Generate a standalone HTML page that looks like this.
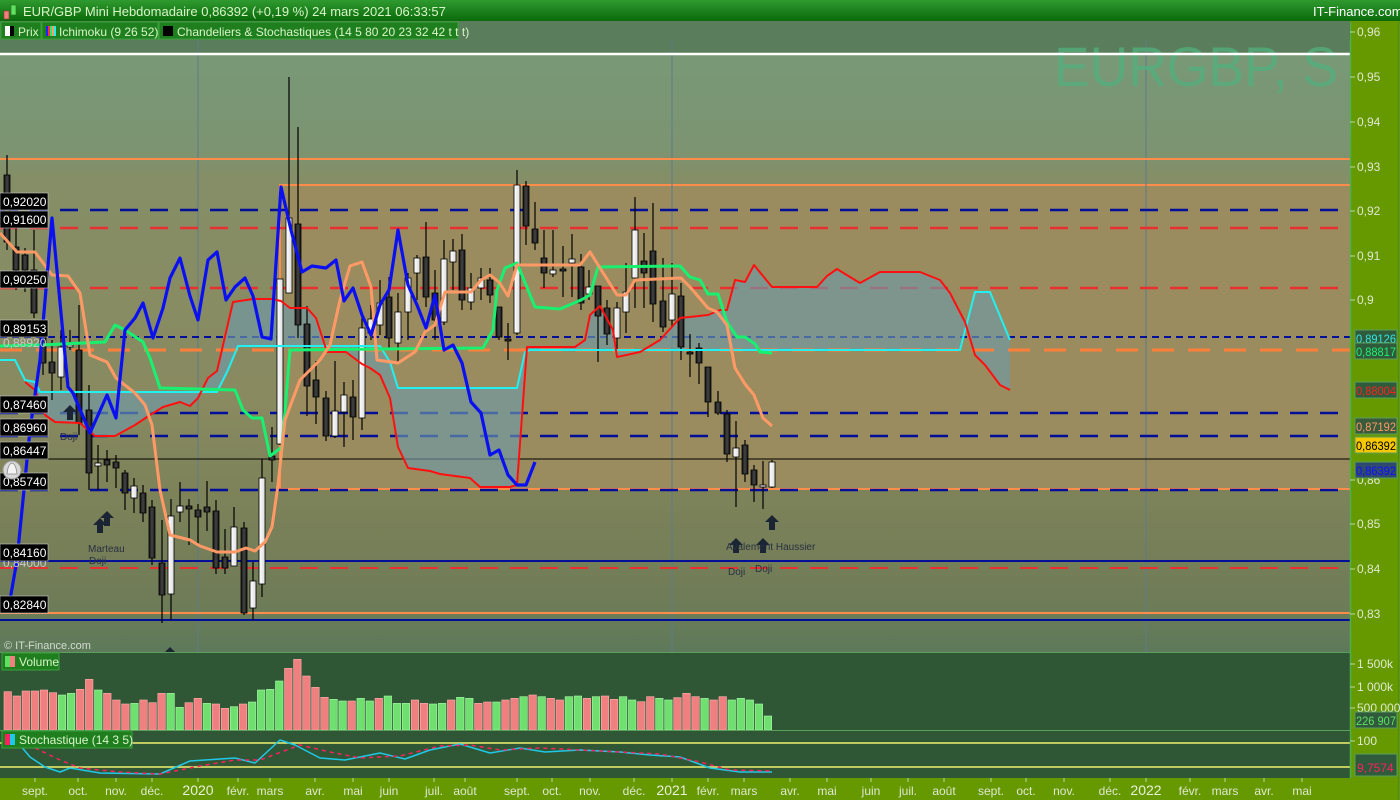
<!DOCTYPE html>
<html><head><meta charset="utf-8">
<style>
html,body{margin:0;padding:0;width:1400px;height:800px;overflow:hidden;background:#669900;font-family:"Liberation Sans",sans-serif;}
#wrap{position:relative;width:1400px;height:800px;}
svg text{font-family:"Liberation Sans",sans-serif;}
</style></head>
<body><div id="wrap">
<svg id="s" width="1400" height="800" xmlns="http://www.w3.org/2000/svg">
<defs>
<linearGradient id="bg" x1="0" y1="0" x2="0" y2="1">
<stop offset="0" stop-color="#779a78"/>
<stop offset="0.2" stop-color="#7c9472"/>
<stop offset="0.25" stop-color="#858e66"/>
<stop offset="0.6" stop-color="#898a60"/>
<stop offset="0.75" stop-color="#7d8259"/>
<stop offset="0.92" stop-color="#6f7c58"/>
<stop offset="1" stop-color="#5d7a5a"/>
</linearGradient>
<linearGradient id="hdr" x1="0" y1="0" x2="0" y2="1">
<stop offset="0" stop-color="#2f9a2f"/><stop offset="1" stop-color="#0b6a0b"/>
</linearGradient>
<linearGradient id="cw" x1="0" y1="0" x2="1" y2="0">
<stop offset="0" stop-color="#fff"/><stop offset="1" stop-color="#ddd"/>
</linearGradient>
<linearGradient id="cb" x1="0" y1="0" x2="1" y2="0">
<stop offset="0" stop-color="#111"/><stop offset="0.5" stop-color="#444"/><stop offset="1" stop-color="#111"/>
</linearGradient>
</defs>
<g id="g"></g>
</svg>
</div>
<script>
var G=document.getElementById("g"),H="";
function r(x,y,w,h,f,extra){H+='<rect x="'+x+'" y="'+y+'" width="'+w+'" height="'+h+'" fill="'+f+'" '+(extra||'')+'/>';}
function l(x1,y1,x2,y2,c,w,d){H+='<line x1="'+x1+'" y1="'+y1+'" x2="'+x2+'" y2="'+y2+'" stroke="'+c+'" stroke-width="'+w+'"'+(d?' stroke-dasharray="'+d+'"':'')+'/>';}
function t(x,y,s,sz,c,extra){H+='<text x="'+x+'" y="'+y+'" font-size="'+sz+'" fill="'+c+'" '+(extra||'')+'>'+s+'</text>';}
function pl(p,c,w,extra){H+='<polyline points="'+p.map(function(a){return a.join(',')}).join(' ')+'" fill="none" stroke="'+c+'" stroke-width="'+w+'" stroke-linejoin="round" '+(extra||'')+'/>';}
r(0,22,1350,630,"url(#bg)");
r(0,22,1350,32,"#5a7e5b");
r(279,184,1071,306,"#9a8c5e");
H+='<rect x="280" y="185" width="1072" height="304" fill="none" stroke="#ff8c4a" stroke-width="2"/>';
[198,672,1146].forEach(function(x){l(x,22,x,778,"#5f7a8a",1);});
t(1054,86,"EURGBP, S",56,"#52b07e",'opacity="0.75" textLength="284" lengthAdjust="spacingAndGlyphs"');
l(0,54,1350,54,"#ffffff",2.5);
l(0,159,1350,159,"#ff8c4a",2);
l(0,210,1350,210,"#000f9a",2.5,"18,12");
l(0,228,1350,228,"#e83030",2.5,"18,12");
l(0,288,1350,288,"#e83030",2.5,"18,12");
l(0,337,1350,337,"#000f9a",2,"7,5");
l(0,413,1350,413,"#000f9a",2.5,"18,12");
l(0,436,1350,436,"#000f9a",2.5,"18,12");
l(0,459,1350,459,"#000",1);
l(0,490,1350,490,"#000f9a",2.5,"18,12");
l(0,561,1350,561,"#000f9a",2);
l(0,568,1350,568,"#e83030",2,"18,12");
l(0,613,1350,613,"#ff8c4a",2);
l(0,620,1350,620,"#000f9a",2);
var red=[[25,382],[35,390],[45,415],[55,422],[80,423],[95,436],[115,436],[135,425],[150,415],[163,407],[180,402],[190,406],[198,398],[208,378],[217,371],[233,302],[253,299],[272,299],[281,301],[290,308],[307,308],[316,318],[327,352],[346,352],[362,364],[370,368],[380,375],[390,398],[398,447],[408,468],[430,471],[440,474],[470,478],[480,487],[510,487],[517,485],[527,347],[575,347],[585,340],[590,315],[600,306],[613,330],[617,357],[640,352],[660,340],[680,318],[708,315],[720,310],[727,310],[735,280],[745,282],[754,265],[772,287],[817,287],[827,276],[837,269],[850,277],[860,283],[880,272],[920,272],[940,280],[950,293],[965,322],[975,355],[985,365],[1000,385],[1010,390]];
var cyan=[[0,360],[15,360],[25,380],[35,382],[40,392],[217,392],[228,370],[238,346],[380,346],[390,362],[398,388],[517,388],[525,352],[530,350],[960,350],[975,292],[990,292],[1010,340]];
var poly=red.concat(cyan.slice(2).reverse());
H+='<polygon points="'+poly.map(function(a){return a.join(',')}).join(' ')+'" fill="#6f9aa8" fill-opacity="0.65"/>';
l(0,350,1350,350,"#ff7f3a",3,"22,14");
var C=[[7,175,242,155,250],[16,247,270,225,290],[25,255,270,248,292],[34,270,313,230,318],[43,327,363,313,375],[52,362,373,340,400],[61,377,347,330,390],[70,346,345,330,350],[79,350,423,305,435],[89,410,473,385,490],[98,466,463,445,490],[107,460,465,450,482],[116,462,468,455,488],[125,473,493,470,510],[134,498,486,478,513],[143,493,513,485,522],[152,507,558,500,565],[162,563,595,520,623],[171,594,516,499,620],[180,512,506,482,522],[189,506,509,499,545],[198,510,517,504,545],[207,507,512,481,531],[216,511,568,500,574],[225,557,568,529,574],[234,566,527,507,566],[244,528,613,522,615],[253,608,581,562,620],[262,584,478,459,597],[272,456,460,427,482],[280,444,279,279,445],[289,293,218,77,293],[298,224,325,127,338],[307,324,386,306,416],[316,380,397,361,424],[326,398,436,391,441],[335,436,411,361,438],[344,412,395,382,447],[353,397,417,380,440],[362,418,328,318,430],[371,333,319,305,340],[380,325,303,280,335],[389,297,338,277,350],[398,343,312,293,362],[408,312,278,273,340],[417,273,258,255,300],[426,257,297,222,307],[435,293,320,270,340],[444,322,259,240,325],[453,262,251,239,290],[462,250,300,234,310],[471,302,288,273,310],[481,288,278,268,300],[490,280,295,268,303],[499,307,337,307,340],[508,339,339,323,360],[517,333,185,170,335],[526,186,226,181,245],[535,229,243,202,250],[544,258,273,230,288],[553,274,270,230,277],[563,269,269,246,297],[572,263,259,234,297],[581,267,303,254,310],[589,294,287,270,300],[598,286,316,287,362],[607,308,334,300,345],[617,338,308,302,350],[626,312,292,263,333],[635,278,230,197,308],[644,261,273,233,308],[653,251,304,203,322],[663,301,327,258,332],[672,320,294,263,327],[681,296,347,283,360],[690,352,352,334,377],[699,348,363,343,384],[708,367,402,367,417],[718,402,413,391,415],[727,414,454,410,462],[736,457,448,421,507],[745,445,474,440,482],[754,470,485,465,502],[763,487,485,461,509],[772,487,462,460,488]];
C.forEach(function(c){var x=c[0],o=c[1],cl=c[2],hi=c[3],lo=c[4];var white=cl<o;
l(x,hi,x,lo,"#000",1.2);var top=Math.min(o,cl),h=Math.max(Math.abs(o-cl),2);
H+='<rect x="'+(x-3)+'" y="'+top+'" width="6" height="'+h+'" fill="'+(white?"url(#cw)":"url(#cb)")+'" stroke="#000" stroke-width="0.8"/>';});
pl(cyan,"#22f0f0",2);
pl(red,"#ff1010",2);
pl([[0,346],[40,345],[105,342],[115,325],[125,330],[143,342],[150,358],[160,388],[235,390],[243,410],[252,418],[262,418],[270,456],[282,447],[290,350],[483,348],[493,330],[497,290],[505,268],[517,263],[535,307],[560,309],[581,300],[590,295],[598,267],[680,266],[690,277],[700,280],[708,294],[718,294],[727,322],[737,337],[745,337],[755,344],[760,352],[772,353]],"#18f070",3);
pl([[0,233],[17,252],[35,252],[52,275],[68,276],[80,293],[90,355],[107,362],[116,378],[135,393],[145,405],[152,425],[160,490],[170,535],[190,540],[200,546],[217,552],[235,552],[246,548],[255,551],[265,542],[272,527],[278,485],[285,420],[300,380],[320,360],[330,345],[340,300],[350,266],[362,262],[371,287],[377,360],[398,363],[415,352],[425,332],[435,325],[445,292],[471,292],[481,280],[490,275],[499,282],[508,296],[517,265],[526,265],[580,265],[590,252],[600,268],[617,295],[626,295],[635,280],[681,278],[690,287],[708,308],[717,312],[727,325],[735,368],[745,384],[754,395],[763,418],[772,426]],"#ff9a66",3);
pl([[3,600],[10,600],[17,560],[30,430],[40,360],[52,218],[68,387],[73,393],[90,433],[107,395],[116,418],[125,330],[135,318],[143,303],[153,338],[163,308],[170,278],[180,258],[190,296],[198,320],[208,260],[217,252],[226,300],[235,287],[245,278],[253,296],[262,337],[271,339],[281,187],[291,230],[302,272],[312,266],[326,268],[336,260],[344,301],[353,288],[362,315],[371,335],[380,305],[389,290],[398,230],[408,285],[417,305],[426,328],[435,295],[444,350],[453,345],[462,363],[471,402],[481,413],[490,455],[499,450],[508,475],[517,485],[526,485],[535,462]],"#0a10f0",3.2);
function arrow(x,y){H+='<path d="M'+(x-7)+' '+(y+7)+' L'+x+' '+y+' L'+(x+7)+' '+(y+7)+' L'+(x+3)+' '+(y+7)+' L'+(x+3)+' '+(y+15)+' L'+(x-3)+' '+(y+15)+' L'+(x-3)+' '+(y+7)+'Z" fill="#1a2433"/>';}
arrow(70,405);arrow(100,518);arrow(107,511);arrow(736,538);arrow(763,538);arrow(772,515);
t(60,440,"Doji",10,"#2a3040");t(88,552,"Marteau",10,"#2a3040");t(89,564,"Doji",10,"#2a3040");
t(726,550,"Avalement Haussier",10,"#2a3040");t(728,575,"Doji",10,"#2a3040");t(755,572,"Doji",10,"#2a3040");
H+='<path d="M165 652 L170 647 L175 652Z" fill="#1a2433"/>';
function lab(y,s){r(0,y-17,48,17,"#000",'stroke="#c8c8c8" stroke-width="0.6"');t(3,y-4,s,12,"#fff");}
t(3,347,"0,88920",12,"#c8c8c8");
t(3,567,"0,84000",12,"#c8c8c8");
[[210,"0,92020"],[228,"0,91600"],[288,"0,90250"],[337,"0,89153"],[413,"0,87460"],[436,"0,86960"],[459,"0,86447"],[490,"0,85740"],[561,"0,84160"],[613,"0,82840"]].forEach(function(a){lab(a[0],a[1]);});
H+='<circle cx="12" cy="470" r="9" fill="#d8d8d8" stroke="#999"/><path d="M7 474 Q8 464 12 463 Q16 464 17 474Z" fill="#f4f4f4" stroke="#888" stroke-width="0.8"/>';
t(4,649,"© IT-Finance.com",11,"#d0dcd0");
r(0,652,1350,78,"#2f5735");
l(0,652.5,1350,652.5,"#5aa05a",1);
var VT=[185,198,183,183,180,188,195,190,178,148,180,190,210,222,220,210,218,190,190,232,218,205,220,222,235,230,222,216,180,178,153,115,88,138,172,202,208,213,213,205,213,205,198,220,220,210,220,222,220,210,202,205,220,216,216,210,205,200,195,200,205,210,200,198,205,200,198,208,200,210,215,200,205,210,203,190,200,205,210,200,210,205,210,222,258];
var VC="rrrrrrggrrgrrrgrrrggrrgrrgrggggrrrrrggrggrgggrrggrggrrgrrgrgrrggrgrrggrrggrrrgrrggggg";
for(var i=0;i<VT.length;i++){var x=4+i*9.05,y=630+VT[i]/3;var c=VC[i]=="g"?"#6fe06f":"#f08080";var s=VC[i]=="g"?"#a8f8a8":"#ffb0b0";
H+='<rect x="'+x+'" y="'+y+'" width="7.5" height="'+(730-y)+'" fill="'+c+'" stroke="'+s+'" stroke-width="0.6"/>';}
r(0,731,1350,47,"#2f5735");
l(0,730.5,1350,730.5,"#5aa05a",1);
l(0,743,1350,743,"#f0f070",1.5);l(0,767,1350,767,"#f0f070",1.5);
pl([[20,745],[30,757],[45,767],[60,772],[70,768],[100,773],[160,774],[190,761],[235,758],[255,763],[280,740],[295,745],[320,758],[345,760],[380,753],[405,759],[430,750],[460,744],[490,753],[520,748],[545,752],[580,750],[620,752],[650,755],[680,757],[710,768],[740,772],[772,772]],"#20c8e8",1.5);
pl([[35,748],[60,760],[80,768],[120,772],[160,774],[200,766],[235,760],[260,760],[300,745],[330,752],[360,758],[400,756],[440,746],[470,745],[500,750],[540,748],[580,750],[620,752],[660,754],[700,762],[730,770],[772,771]],"#ff2060",1.5,'stroke-dasharray="4,4"');
r(1350,22,50,778,"#669900");
l(1350.5,22,1350.5,778,"#4caf50",1.5);
l(1398.5,22,1398.5,800,"#4a8a2a",1);
[[32,"0,96"],[77,"0,95"],[122,"0,94"],[167,"0,93"],[211,"0,92"],[256,"0,91"],[300,"0,9"],[480,"0,86"],[524,"0,85"],[569,"0,84"],[614,"0,83"]].forEach(function(a){l(1350,a[0],1355,a[0],"#b8d8a0",1);t(1357,a[0]+4,a[1],12,"#dfe8cf");});
function rl(y,s,bg,fg){r(1355,y-8,42,16,bg,'stroke="#5aa05a" stroke-width="1"');t(1356,y+5,s,12,fg,'textLength="40" lengthAdjust="spacingAndGlyphs"');}
rl(338,"0,89126","#2f5a3c","#30e8e8");rl(351,"0,88817","#2f5a3c","#20f070");rl(390,"0,88004","#2f5a3c","#ff2020");rl(426,"0,87192","#3a5a3c","#ff9a66");rl(445,"0,86392","#f6c800","#000");rl(470,"0,86392","#2f4a6c","#1010ff");
[[664,"1 500k"],[687,"1 000k"],[708,"500 000"],[741,"100"]].forEach(function(a){l(1350,a[0],1355,a[0],"#b8d8a0",1);t(1357,a[0]+4,a[1],12,"#dfe8cf");});
rl(720,"226 907","#2f5a3c","#60e060");
r(1355,754,42,22,"#2f5a3c",'stroke="#5aa05a"');t(1357,772,"9,7574",12,"#ff2060");
r(0,778,1352,22,"#669900");
[[35,"sept."],[78,"oct."],[116,"nov."],[152,"déc."],[198,"2020",1],[238,"févr."],[270,"mars"],[315,"avr."],[353,"mai"],[389,"juin"],[434,"juil."],[465,"août"],[517,"sept."],[552,"oct."],[590,"nov."],[634,"déc."],[672,"2021",1],[708,"févr."],[744,"mars"],[790,"avr."],[827,"mai"],[871,"juin"],[908,"juil."],[944,"août"],[991,"sept."],[1026,"oct."],[1064,"nov."],[1110,"déc."],[1146,"2022",1],[1190,"févr."],[1225,"mars"],[1264,"avr."],[1302,"mai"]].forEach(function(a){l(a[0],778,a[0],782,"#b8d8a0",1);t(a[0],795,a[1],a[2]?14:12,a[2]?"#e8f0d8":"#dfe8cf",'text-anchor="middle"');});
r(0,0,1400,21,"url(#hdr)");
H+='<rect x="4" y="11" width="5" height="8" fill="#f08080" stroke="#a03030" stroke-width="0.6"/><rect x="11" y="5" width="5" height="10" fill="#60e060" stroke="#207020" stroke-width="0.6"/>';
t(23,16,"EUR/GBP Mini Hebdomadaire 0,86392 (+0,19 %) 24 mars 2021 06:33:57",13,"#d8f5c8");
t(1313,16,"IT-Finance.com",13,"#ffffff");
r(0,21,1350,19,"#5a7e5b");
r(1,22,40,17,"#1f7f1f",'stroke="#3aa03a"');r(42,22,116,17,"#1f7f1f",'stroke="#3aa03a"');r(159,22,299,17,"#1f7f1f",'stroke="#3aa03a"');
r(5,26,9,10,"#fff");r(10,26,4,10,"#000");t(18,36,"Prix",12,"#d8f5c8");
r(46,26,2,10,"#2020ff");r(48,26,2,10,"#ff3030");r(50,26,2,10,"#20f070");r(52,26,2,10,"#ff9a66");r(54,26,2,10,"#20f0f0");t(59,36,"Ichimoku (9 26 52)",12,"#d8f5c8");
r(163,26,10,10,"#000");t(177,36,"Chandeliers &amp; Stochastiques (14 5 80 20 23 32 42 t t t)",12,"#d8f5c8");
r(2,653,57,17,"#1f7f1f",'stroke="#3aa03a"');r(5,656,5,11,"#60e060");r(10,656,5,11,"#f08080");t(19,666,"Volume",12,"#d8f5c8");
r(2,731,130,17,"#1f7f1f",'stroke="#3aa03a"');r(5,734,5,11,"#ff2060");r(10,734,5,11,"#20c8e8");t(19,744,"Stochastique (14 3 5)",12,"#d8f5c8");
G.innerHTML=H;
</script>
</body></html>
